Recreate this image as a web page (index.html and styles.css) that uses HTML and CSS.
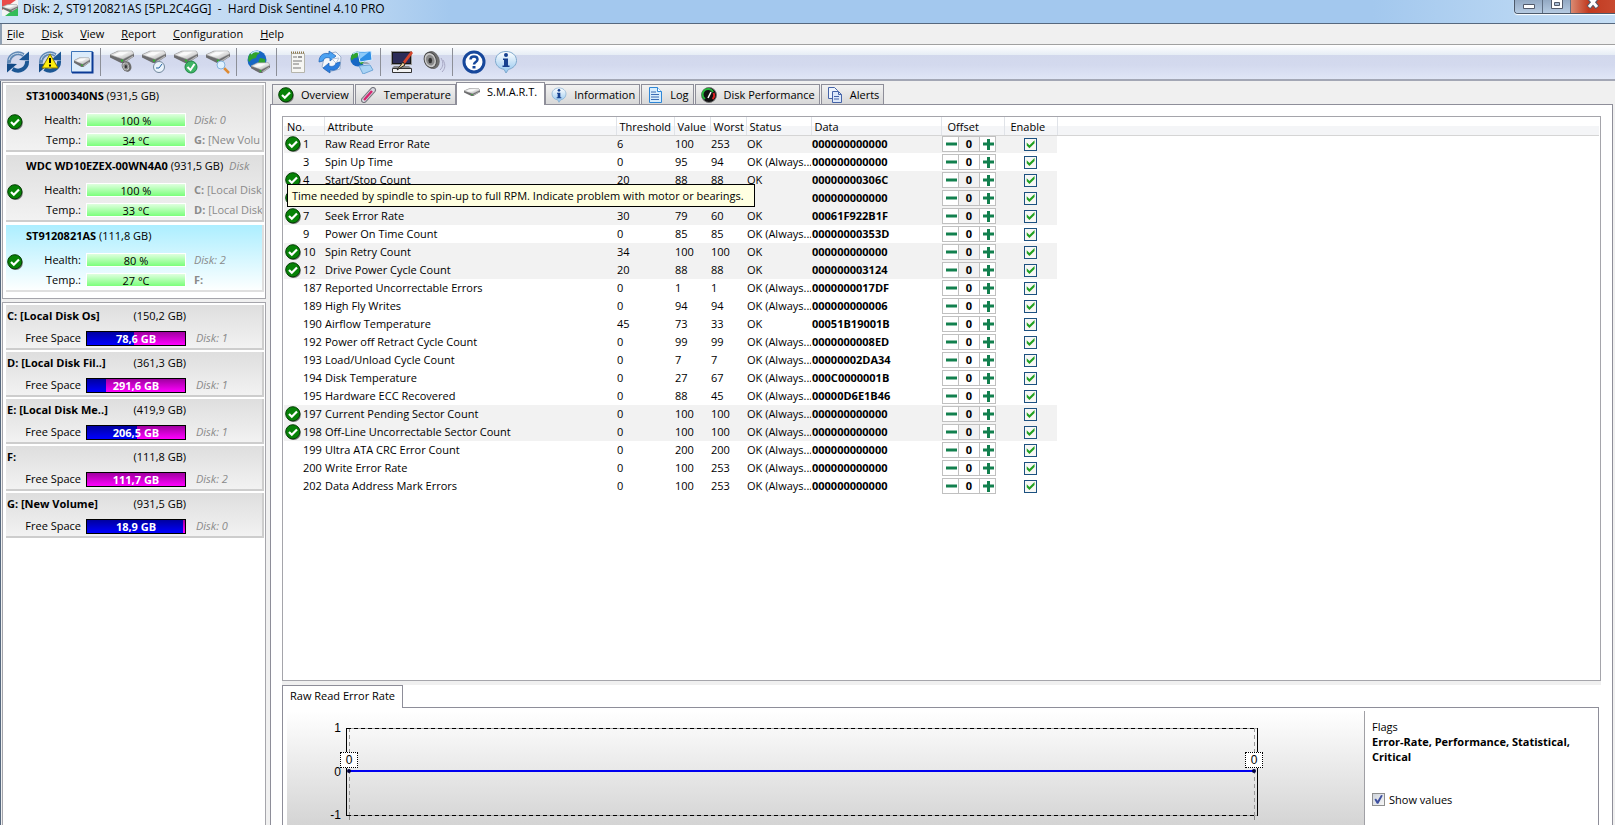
FILE: index.html
```html
<!DOCTYPE html>
<html lang="en">
<head>
	<meta charset="utf-8">
	<title>Hard Disk Sentinel 4.10 PRO</title>
	<link rel="stylesheet" href="styles.css">
	<script src="script.js" defer></script>
</head>

<body>

	<svg class="defs" aria-hidden="true">
		<linearGradient id="gInfo" x1="0" y1="0" x2="0" y2="1">
			<stop offset="0" stop-color="#ffffff"/><stop offset="1" stop-color="#8fc4ee"/>
		</linearGradient>
		<linearGradient id="gDrive" x1="0" y1="0" x2="1" y2="1">
			<stop offset="0" stop-color="#bdbdbd"/><stop offset=".4" stop-color="#f4f4f4"/><stop offset="1" stop-color="#a8a8a8"/>
		</linearGradient>
		<symbol id="ok" viewBox="0 0 16 16">
			<circle cx="8.6" cy="8.8" r="7.2" fill="#777"/>
			<circle cx="7.8" cy="7.8" r="7.1" fill="#078207" stroke="#033c03"/>
			<path d="M4 8l2.8 2.8L12 5.4" fill="none" stroke="#fff" stroke-width="2.2"/>
		</symbol>
		<symbol id="refresh" viewBox="0 0 24 24">
			<path d="M3 13C2.500 6 10 0.500 17.500 5" fill="none" stroke="#5f88b5" stroke-width="4"/>
			<path d="M13 10l10 .5V1.500z" fill="#1c5794"/>
			<path d="M21 11c.5 7-7 12.500-14.500 8" fill="none" stroke="#1c5794" stroke-width="4"/>
			<path d="M11 14L1 13.500v9z" fill="#124a86"/>
			<path d="M3 10C4 4.500 11 1.500 17 4.500" fill="none" stroke="#c7daea" stroke-width="1"/>
		</symbol>
		<symbol id="drive" viewBox="0 0 24 14" preserveAspectRatio="none">
			<path d="M0 5L8 1l14 0 2 3v3l-10 7h-3L0 8z" fill="#6c6c6e"/>
			<path d="M0 5L8 1h14l2 3-11 6z" fill="url(#gDrive)" stroke="#9c9c9c" stroke-width=".5"/>
			<path d="M4 5l6-3 8 .5-6 3.500z" fill="#fafafa"/>
			<path d="M14 12l9-6v1.500l-8 5.500z" fill="#b5b5b5"/>
			<circle cx="12" cy="11.500" r="1.200" fill="#2fb62f"/>
		</symbol>
		<symbol id="info" viewBox="0 0 24 24">
			<path d="M12 1.500c6 0 10.500 3.800 10.500 9 0 4.500-3.500 8-8 8.800L12 23l-2-3.700c-5-.6-8.500-4.300-8.500-8.800 0-5.200 4.500-9 10.500-9z" fill="url(#gInfo)" stroke="#7fa9cd"/>
			<circle cx="12" cy="5" r="2" fill="#16408f"/>
			<path d="M9 8.500h5v7h1.500v1.500H8.500v-1.500H10V10H9z" fill="#16408f"/>
		</symbol>
		<symbol id="speaker" viewBox="0 0 24 24">
			<ellipse cx="11" cy="11" rx="8" ry="10" transform="rotate(-20 11 11)" fill="#6e6e6e"/>
			<ellipse cx="9" cy="11" rx="6.500" ry="8.500" transform="rotate(-20 9 11)" fill="#c9c9c9" stroke="#444"/>
			<ellipse cx="9" cy="11" rx="4.500" ry="6" transform="rotate(-20 9 11)" fill="#8a8a8a"/>
			<ellipse cx="9" cy="11.500" rx="2" ry="3" fill="#333"/>
		</symbol>
		<symbol id="globe" viewBox="0 0 20 20">
			<circle cx="10" cy="10" r="9.500" fill="#1767c4"/>
			<path d="M5 2c4-2 7-1 8 1l-3 2-1 3-4 1-3 3C0 8 2 4 5 2zM13 8l5 1c1 4-1 7-4 8l-3-4z" fill="#2ea32e"/>
			<path d="M4 4c2-3 6-3 8-2" fill="none" stroke="#bfe0ff" stroke-width="1.500"/>
		</symbol>
		<symbol id="monitor" viewBox="0 0 16 14">
			<path d="M1 1l13-1 1 9-12 2z" fill="#2d8fe6" stroke="#dceefc"/>
			<path d="M2 2l10-1-9 7z" fill="#8ccaf9"/>
			<path d="M7 11h3l3 2H5z" fill="#9aa7b5"/>
		</symbol>
	</svg>

	<div class="window">

		<header class="titlebar">
			<svg class="app-icon" viewBox="0 0 16 16">
				<path d="M0 0h16v16H0z" fill="#f4f4f4"/>
				<path d="M0 0h14L0 10z" fill="#ea4a4a"/>
				<path d="M16 16V6L3 16z" fill="#35bd58"/>
				<use href="#drive" x="0" y="4" width="16" height="8"/>
			</svg>
			<h1>Disk: 2, ST9120821AS [5PL2C4GG] &nbsp;- &nbsp;Hard Disk Sentinel 4.10 PRO</h1>
			<div class="win-buttons">
				<button aria-label="Minimize"><svg viewBox="0 0 14 9"><path d="M1.500 4.500h11v4h-11z" fill="#fff" stroke="#525a6b"/></svg></button>
				<button aria-label="Restore"><svg viewBox="0 0 14 9"><path d="M1.500-3h11V8.500h-11z" fill="#fff" stroke="#525a6b"/><path d="M4.500 2.500h5v3h-5z" fill="#a9bdd4" stroke="#525a6b"/></svg></button>
				<button class="close" aria-label="Close"><svg viewBox="0 0 14 9"><path d="M2.500-3l9 10.500M11.500-3l-9 10.500" stroke="#525a6b" stroke-width="5"/><path d="M3-2.500l8 9.500M11-2.500L3 7" stroke="#fff" stroke-width="3"/></svg></button>
			</div>
		</header>

		<nav class="menubar">
			<button><u>F</u>ile</button>
			<button><u>D</u>isk</button>
			<button><u>V</u>iew</button>
			<button><u>R</u>eport</button>
			<button><u>C</u>onfiguration</button>
			<button><u>H</u>elp</button>
		</nav>

		<div class="toolbar">
			<button aria-label="Refresh"><svg viewBox="0 0 24 24"><use href="#refresh"/></svg></button>
			<button aria-label="Force refresh"><svg viewBox="0 0 24 24"><use href="#refresh"/><path d="M12 4l8 14H4z" fill="#ffee10" stroke="#8a7a00"/><path d="M12 8v5M12 14.500v2" stroke="#000" stroke-width="2"/></svg></button>
			<button aria-label="Disk panel"><svg viewBox="0 0 24 24"><path d="M1.500 1.500h21v21h-21z" fill="#dcecfb" stroke="#3d74b8"/><path d="M22.500 2v20.500H2" fill="none" stroke="#0a3a96" stroke-width="2"/><use href="#drive" x="4" y="7" width="16" height="10"/></svg></button>
			<span class="sep"></span>
			<button aria-label="Acoustic settings"><svg viewBox="0 0 24 24"><use href="#drive" width="24" height="13"/><use href="#speaker" x="11" y="10" width="13" height="14"/></svg></button>
			<button aria-label="Short test"><svg viewBox="0 0 24 24"><use href="#drive" width="24" height="13"/><circle cx="17" cy="17" r="5.500" fill="#eaf3fb" stroke="#71879c"/><path d="M17 18l3-4M17 18h-3" stroke="#1f5f9f"/></svg></button>
			<button aria-label="Extended test"><svg viewBox="0 0 24 24"><use href="#drive" width="24" height="13"/><circle cx="17" cy="17" r="6" fill="#3fb565" stroke="#1d8743"/><path d="M13.500 17l3 3 4-6" fill="none" stroke="#fff" stroke-width="2"/></svg></button>
			<button aria-label="Surface test"><svg viewBox="0 0 24 24"><use href="#drive" width="24" height="13"/><path d="M18 18l5 5" stroke="#dd8a33" stroke-width="2.500"/><circle cx="15" cy="15" r="4" fill="#dff1ff" stroke="#86b3dc"/></svg></button>
			<span class="sep"></span>
			<button aria-label="Online"><svg viewBox="0 0 24 24"><use href="#globe" x="1" y="0" width="20" height="20"/><use href="#drive" x="5" y="12" width="19" height="11"/></svg></button>
			<span class="sep"></span>
			<button aria-label="Report"><svg viewBox="0 0 24 24"><path d="M5.500 3.500h13v19h-13z" fill="#f6f6f3" stroke="#b5b5ac"/><path d="M5 2.500h14" stroke="#8d7747" stroke-width="2" stroke-dasharray="1 1"/><path d="M7 7h4M7 11h9M7 14h6M7 18h8" stroke="#777"/><path d="M12 6h4v2h-4z" fill="#999"/></svg></button>
			<button aria-label="Send report"><svg viewBox="0 0 24 24"><path d="M7 4l11-2 5 5-1 12-12 3-6-5z" fill="#f4f6fa" stroke="#9fb2cd"/><path d="M1 12C1 5 6 2 11 4V1l7 5-6 5V8C8 7 6 8 5 11z" fill="#4ba2f2" stroke="#1b5fb3" stroke-width=".7"/><path d="M22 12c0 7-5 9-10 8v3l-7-5 6-5v3c4 1 6 0 7-3z" fill="#2b7ee0" stroke="#1b5fb3" stroke-width=".7"/><path d="M14 9l7-1-3 5z" fill="#fff" stroke="#b7c6dd"/></svg></button>
			<button aria-label="Network"><svg viewBox="0 0 24 24"><use href="#globe" x="0" y="1" width="16" height="16"/><use href="#monitor" x="7" y="1" width="16" height="14"/><path d="M9 16l11-1 3 5-10 4z" fill="#a9d3f5" stroke="#6fa6d6"/></svg></button>
			<span class="sep"></span>
			<button aria-label="Appearance"><svg viewBox="0 0 24 24"><path d="M1 1h21v14H1z" fill="#9a9a9a"/><path d="M2 2h19v12H2z" fill="#161616"/><path d="M3 3h17v10H3z" fill="#2c2c58"/><path d="M4 16h15l2 2H2z" fill="#888"/><path d="M2.500 18.500h19v4h-19z" fill="#f2f2f2" stroke="#333"/><path d="M21 1l2 2-9 12-2-2z" fill="#d6452b"/><path d="M13 12l2 3-8 5z" fill="#f2d6a0" stroke="#222"/></svg></button>
			<button aria-label="Sound"><svg viewBox="0 0 24 24"><use href="#speaker" width="22" height="22"/><path d="M19 8c3 5 2 9-1 12M21 10c3 5 2 9-1 12" fill="none" stroke="#a8a8c4"/></svg></button>
			<span class="sep"></span>
			<button aria-label="Help"><svg viewBox="0 0 24 24"><circle cx="12" cy="12" r="10" fill="#fff" stroke="#16479b" stroke-width="3"/><path d="M8.500 9.500c0-4 7-4 7 0 0 2.500-3.500 2.500-3.500 5" fill="none" stroke="#16479b" stroke-width="2.500"/><path d="M10.500 16h3v2.500h-3z" fill="#16479b"/></svg></button>
			<button aria-label="About"><svg viewBox="0 0 24 24"><use href="#info"/></svg></button>
		</div>

		<div class="body">

			<aside class="sidebar">
				<div class="box disks" id="disks"></div>
				<div class="box volumes" id="volumes"></div>
			</aside>

			<main class="main">
				<div class="tabs" role="tablist">
					<button role="tab"><svg viewBox="0 0 16 16"><use href="#ok"/></svg>Overview</button>
					<button role="tab"><svg viewBox="0 0 16 16"><path d="M3 13L12 3" stroke="#77777f" stroke-width="6" stroke-linecap="round"/><path d="M3 13L12 3" stroke="#d8d8e0" stroke-width="4" stroke-linecap="round"/><path d="M3 13l8-9" stroke="#d3266f" stroke-width="2.500"/></svg>Temperature</button>
					<button role="tab" class="active" aria-selected="true"><svg viewBox="0 0 16 16"><use href="#drive" y="4" width="16" height="8"/></svg>S.M.A.R.T.</button>
					<button role="tab"><svg viewBox="0 0 24 24"><use href="#info"/></svg>Information</button>
					<button role="tab"><svg viewBox="0 0 16 16"><path d="M2.500.5h8l4 4v11h-12z" fill="#d8edfd" stroke="#2f86d6"/><path d="M10.500.5v4h4" fill="#fff" stroke="#2f86d6"/><path d="M4 5h5M4 7.500h8M4 10h8M4 12.500h8" stroke="#3c6db4"/></svg>Log</button>
					<button role="tab"><svg viewBox="0 0 16 16"><circle cx="8" cy="8" r="7.500" fill="#111" stroke="#777"/><path d="M4 12a5.500 5.500 0 1 1 8-7" fill="none" stroke="#25b43a" stroke-width="2"/><path d="M12.500 6a5 5 0 0 1-1 6" fill="none" stroke="#d22" stroke-width="2"/><path d="M7 11l3-6" stroke="#fff" stroke-width="1.500"/></svg>Disk Performance</button>
					<button role="tab"><svg viewBox="0 0 16 16"><path d="M1.500.5h6l3 3v8h-9z" fill="#eef4fd" stroke="#4664a8"/><path d="M5.500 4.500h6l3 3v8h-9z" fill="#dce8fa" stroke="#4664a8"/><path d="M11.500 4.500v3h3M7 9.500h5M7 12h5" fill="none" stroke="#4664a8"/></svg>Alerts</button>
				</div>

				<div class="page">
					<div class="list">
						<table class="smart">
							<thead>
								<tr>
									<th class="c-no">No.</th>
									<th class="c-attr">Attribute</th>
									<th class="c-thr">Threshold</th>
									<th class="c-val">Value</th>
									<th class="c-val">Worst</th>
									<th class="c-stat">Status</th>
									<th class="c-data">Data</th>
									<th class="c-off">Offset</th>
									<th class="c-en">Enable</th>
									<th></th>
								</tr>
							</thead>
							<tbody id="attributes"></tbody>
						</table>
						<div class="tooltip" role="tooltip">Time needed by spindle to spin-up to full RPM. Indicate problem with motor or bearings.</div>
					</div>

					<div class="splitter"></div>

					<section class="detail">
						<div class="subtabs"><button>Raw Read Error Rate</button></div>
						<div class="detail-page">
							<div class="chart">
								<div class="y-axis"><span>1</span><span>0</span><span>-1</span></div>
								<div class="plot">
									<div class="line"></div>
									<span class="point left">0</span>
									<span class="point right">0</span>
								</div>
							</div>
							<div class="flags">
								<p>Flags</p>
								<p class="flag-list">Error-Rate, Performance, Statistical, Critical</p>
								<label><input type="checkbox" class="win-check" checked>Show values</label>
							</div>
						</div>
					</section>
				</div>
			</main>

		</div>
	</div>

</body>
</html>
```
FILE: styles.css
```css
* {
	box-sizing: border-box;
}

body {
	margin: 0;
	font: 11px/16px "Open Sans", "Noto Sans", sans-serif;
	color: #000;
}

button {
	font: inherit;
	color: inherit;
	background: none;
	border: 0;
	padding: 0;
}

p, h1 {
	margin: 0;
}

svg {
	display: block;
}

.defs {
	position: absolute;
	width: 0;
	height: 0;
}

.window {
	display: flex;
	flex-direction: column;
	height: 100vh;
	overflow: hidden;
	background: #f0f0f0;
}

/* title bar */
.titlebar {
	display: flex;
	align-items: flex-start;
	height: 24px;
	padding-left: 2px;
	border-bottom: 1px solid #56687e;
	background: linear-gradient(90deg, #cfe3f6 0, #bcd7f2 350px, #a3c8ee 450px, #a3c8ee 85%, #c5def5 100%);
}

.app-icon {
	width: 16px;
	height: 16px;
	margin-right: 5px;
}

.titlebar h1 {
	flex: 1;
	font-size: 12px;
	font-weight: normal;
	line-height: 17px;
}

.win-buttons {
	display: flex;
	height: 14px;
	border: 1px solid #4d5a6b;
	border-top: 0;
	border-right: 0;
	border-radius: 0 0 0 4px;
	overflow: hidden;
	box-shadow: 0 1px 1px #fff;
}

.win-buttons button {
	width: 28px;
	border-right: 1px solid #5f6f84;
	background: linear-gradient(#93a9c3, #b6cbe2);
}

.win-buttons svg {
	width: 14px;
	height: 9px;
	margin: 0 auto 4px;
}

.win-buttons .close {
	width: 44px;
	border-right: 0;
	background: linear-gradient(90deg, #d98a72, #c23a20 40%, #c8492f);
}

/* menu and toolbar */
.menubar {
	display: flex;
	gap: 17px;
	height: 21px;
	padding-left: 5px;
	border-left: 2px solid #8fa0b3;
	border-bottom: 1px solid #a0a0a0;
}

.toolbar {
	display: flex;
	align-items: center;
	height: 36px;
	padding-left: 2px;
	border-bottom: 2px solid #a3a7b5;
	background: linear-gradient(#fff, #e6edf5 10px, #d2d8ec 10px, #d3d9ee 20px, #e0e6f6);
}

.toolbar button {
	width: 32px;
	padding: 0 4px;
}

.toolbar svg {
	width: 24px;
	height: 24px;
}

.sep {
	width: 1px;
	height: 28px;
	margin: 0 5px 0 2px;
	background: #8c8f98;
}

.body {
	flex: 1;
	display: flex;
	min-height: 0;
	padding: 1px 2px 0 2px;
	border-left: 1px solid #56687e;
}

/* sidebar */
.sidebar {
	display: flex;
	flex-direction: column;
	gap: 3px;
	width: 264px;
	margin-left: -1px;
}

.box {
	padding: 2px 1px 2px 3px;
	background: #fff;
	border: 1px solid #a5a5ab;
}

.disks {
	height: 217px;
}

.volumes {
	flex: 1;
	border-bottom: 0;
}

.disk, .volume {
	display: grid;
	grid-template-columns: 75px 100px 1fr;
	column-gap: 5px;
	align-content: start;
	align-items: center;
	border: solid #cdcdcd;
	border-width: 0 2px 2px 0;
	background: linear-gradient(#dedede, #f2f2f2);
	overflow: hidden;
	white-space: nowrap;
}

.disk {
	position: relative;
	height: 67px;
	margin-bottom: 3px;
	grid-template-rows: 25px 20px 20px;
}

.disk.selected {
	background: linear-gradient(#aceeff, #fdffff);
	border-color: #dfdfdf;
}

.disk .name {
	grid-column: 1 / -1;
	align-self: start;
	padding-left: 20px;
	line-height: 22px;
}

.disk .note, .volume .note {
	color: #8a8a8a;
	padding-left: 3px;
}

.disk .label, .volume .label {
	text-align: right;
}

.disk svg {
	position: absolute;
	left: 1px;
	top: 29px;
	width: 16px;
	height: 16px;
}

.meter {
	height: 14px;
	border: 1px solid #fff;
	background: linear-gradient(#dfffdf, #7bff7b);
	line-height: 14px;
	text-align: center;
}

.volume {
	height: 45px;
	margin-bottom: 2px;
	grid-template-rows: 22px 22px;
}

.volume .title {
	grid-column: 1 / 3;
	display: flex;
	justify-content: space-between;
	padding-left: 1px;
}

.volume .label {
	grid-column: 1;
}

.volume .note {
	padding-left: 5px;
}

.space {
	position: relative;
	height: 15px;
	border: 1px solid #000;
	background: linear-gradient(#a000a0, #ff00ff);
	color: #fff;
	font-weight: bold;
	line-height: 14px;
	text-align: center;
}

.space .used {
	position: absolute;
	left: 0;
	top: 0;
	height: 100%;
	background: linear-gradient(#0000a0, #0000ff);
}

.space .free {
	position: relative;
}

/* main tabs */
.main {
	flex: 1;
	display: flex;
	flex-direction: column;
	min-width: 0;
	margin-left: 4px;
}

.tabs {
	display: flex;
	align-items: flex-end;
	gap: 1px;
	height: 22px;
	padding-left: 2px;
}

.tabs button {
	display: flex;
	align-items: center;
	gap: 7px;
	height: 20px;
	padding: 0 4px 0 5px;
	border: 1px solid #8e8e99;
	border-bottom: 0;
	background: linear-gradient(#f2f2f2, #d8d8d8);
	white-space: nowrap;
}

.tabs svg {
	width: 16px;
	height: 16px;
}

.tabs .active {
	height: 23px;
	margin: 0 -1px;
	padding: 0 7px 4px;
	margin-bottom: -1px;
	background: #fff;
	z-index: 1;
}

.page {
	flex: 1;
	display: flex;
	flex-direction: column;
	min-height: 0;
	padding: 11px 11px 0;
	border: 1px solid #8e8e99;
	border-bottom: 0;
	background: #fff;
}

.list {
	flex: 1;
	position: relative;
	min-height: 0;
	padding: 0 1px;
	border: 1px solid #a5a5ab;
}

/* attribute table */
.smart {
	width: 100%;
	table-layout: fixed;
	border-collapse: collapse;
	white-space: nowrap;
}

.smart th {
	height: 18px;
	padding: 2px 0 0 3px;
	border-right: 1px solid #e0e3e8;
	border-bottom: 1px solid #d5d5d5;
	background: linear-gradient(#fff 50%, #f4f5f7 50%);
	font-weight: normal;
	line-height: 14px;
	text-align: left;
}

.smart th:last-child {
	border-right: 0;
}

.smart td {
	height: 18px;
	padding: 0 0 0 1px;
	line-height: 16px;
	overflow: hidden;
}

.smart .critical td {
	background: #f2f2f2;
}

.smart .critical td:last-child {
	background: none;
}

.c-no { width: 40px; }
.c-attr { width: 292px; }
.c-thr { width: 58px; }
.c-val { width: 36px; }
.c-stat { width: 65px; }
.c-data { width: 130px; }
.c-off { width: 63px; }
.c-en { width: 53px; }

.smart .c-off, .smart .c-en {
	padding-left: 6px;
}

.smart .num {
	display: flex;
	gap: 1px;
}

.num i {
	width: 17px;
	height: 16px;
}

.num svg {
	width: 16px;
	height: 16px;
}

.smart .data {
	font-weight: bold;
}

.stepper {
	display: flex;
	width: 54px;
	height: 16px;
	border: 1px solid #c0c0c0;
}

.stepper button {
	display: grid;
	place-items: center;
	width: 15px;
	background: #fff;
}

.stepper svg {
	width: 12px;
	height: 12px;
}

.stepper input {
	width: 22px;
	padding: 0;
	border: solid #c0c0c0;
	border-width: 0 1px;
	background: transparent;
	font: bold 11px/14px "Open Sans", sans-serif;
	text-align: center;
}

.tick, .win-check {
	appearance: none;
	display: block;
	width: 13px;
	height: 13px;
	margin: 0;
	border: 1px solid #1c5180;
	background: #f7f7f5;
}

.tick {
	margin-left: 19px;
}

.tick:checked::after, .win-check:checked::after {
	content: "";
	display: block;
	width: 9px;
	height: 9px;
	margin: 1px;
	background: #21a121;
	clip-path: polygon(8% 30%, 8% 65%, 38% 95%, 95% 40%, 95% 5%, 38% 60%);
}

.win-check {
	border-color: #8e8f8f;
	background: linear-gradient(135deg, #cfd4dc, #f6f6f6);
}

.win-check:checked::after {
	background: #3d50a0;
	clip-path: polygon(5% 50%, 22% 40%, 40% 65%, 78% 0, 98% 5%, 48% 98%, 32% 98%);
}

.tooltip {
	position: absolute;
	left: 4px;
	top: 67px;
	height: 23px;
	padding: 0 10px 0 4px;
	border: 1px solid #000;
	background: #ffffe1;
	line-height: 21px;
	white-space: nowrap;
}

/* lower pane */
.splitter {
	height: 4px;
	background: #f0f0f0;
}

.detail {
	height: 140px;
	padding-right: 2px;
}

.subtabs button {
	position: relative;
	display: block;
	height: 23px;
	margin-bottom: -1px;
	padding: 0 7px 2px;
	border: 1px solid #8e8e99;
	border-bottom: 0;
	background: #fff;
}

.detail-page {
	display: flex;
	height: 118px;
	padding: 3px 0 0 4px;
	border: 1px solid #8e8e99;
	border-bottom: 0;
}

.chart {
	flex: 1;
	display: flex;
	padding: 17px 106px 0 0;
	background: linear-gradient(#fff, #d4d4d4);
	font: 12px/14px "Liberation Sans", sans-serif;
}

.y-axis {
	display: flex;
	flex-direction: column;
	justify-content: space-between;
	width: 54px;
	height: 101px;
	margin-top: -7px;
	text-align: right;
}

.plot {
	flex: 1;
	position: relative;
	height: 88px;
	margin-left: 5px;
	border: solid #000;
	border-width: 0 1px;
	background:
		repeating-linear-gradient(90deg, #000 0 4px, #aaa 4px 7px) 0 0 / 100% 1px no-repeat,
		repeating-linear-gradient(90deg, #000 0 4px, #aaa 4px 7px) 0 100% / 100% 1px no-repeat,
		repeating-linear-gradient(#999 0 4px, transparent 4px 7px) 2px 0 / 1px 100% no-repeat,
		repeating-linear-gradient(#999 0 4px, transparent 4px 7px) calc(100% - 2px) 0 / 1px 100% no-repeat;
}

/* tick marks under the first and the last value */
.plot::after {
	content: "";
	position: absolute;
	left: 2px;
	right: 2px;
	top: 100%;
	height: 4px;
	border: solid #888;
	border-width: 0 1px;
}

.plot .line {
	position: absolute;
	left: 2px;
	right: 2px;
	top: 42px;
	height: 2px;
	background: #0000f0;
}

.point {
	position: absolute;
	top: 24px;
	width: 18px;
	height: 16px;
	border: 1px dotted #000;
	background: #fff;
	text-align: center;
}

.point::after {
	content: "";
	position: absolute;
	left: 6px;
	top: 16px;
	width: 4px;
	height: 4px;
	border-radius: 2px;
	background: #000040;
}

.point.left {
	left: -7px;
}

.point.right {
	right: -6px;
}

.flags {
	width: 234px;
	padding: 8px 8px 0 7px;
	border-left: 1px solid #a0a0a5;
	line-height: 15px;
}

.flag-list {
	font-weight: bold;
}

.flags label {
	display: flex;
	align-items: center;
	gap: 4px;
	margin-top: 28px;
}
```
FILE: script.js
```js
var okIcon = '<svg viewBox="0 0 16 16"><use href="#ok"/></svg>';

var disks = [
	{ name: "ST31000340NS", size: "931,5 GB", health: "100 %", temp: "34 °C", extra: "", n1: "<em>Disk: 0</em>", n2: "<b>G:</b> [New Volu" },
	{ name: "WDC WD10EZEX-00WN4A0", size: "931,5 GB", health: "100 %", temp: "33 °C", extra: "Disk", n1: "<b>C:</b> [Local Disk", n2: "<b>D:</b> [Local Disk" },
	{ name: "ST9120821AS", size: "111,8 GB", health: "80 %", temp: "27 °C", extra: "", n1: "<em>Disk: 2</em>", n2: "<b>F:</b>", selected: true }
];

// used is the filled share of the bar, in percent
var volumes = [
	{ name: "C: [Local Disk Os]", size: "150,2 GB", free: "78,6 GB", used: 48, disk: 1 },
	{ name: "D: [Local Disk Fil..]", size: "361,3 GB", free: "291,6 GB", used: 19, disk: 1 },
	{ name: "E: [Local Disk Me..]", size: "419,9 GB", free: "206,5 GB", used: 51, disk: 1 },
	{ name: "F:", size: "111,8 GB", free: "111,7 GB", used: 0, disk: 2 },
	{ name: "G: [New Volume]", size: "931,5 GB", free: "18,9 GB", used: 98, disk: 0 }
];

// no, attribute, threshold, value, worst, status, data, critical
var always = "OK (Always...";
var attributes = [
	[1, "Raw Read Error Rate", 6, 100, 253, "OK", "000000000000", 1],
	[3, "Spin Up Time", 0, 95, 94, always, "000000000000", 0],
	[4, "Start/Stop Count", 20, 88, 88, "OK", "00000000306C", 1],
	["", "", "", "", "", "", "000000000000", 1],
	[7, "Seek Error Rate", 30, 79, 60, "OK", "00061F922B1F", 1],
	[9, "Power On Time Count", 0, 85, 85, always, "00000000353D", 0],
	[10, "Spin Retry Count", 34, 100, 100, "OK", "000000000000", 1],
	[12, "Drive Power Cycle Count", 20, 88, 88, "OK", "000000003124", 1],
	[187, "Reported Uncorrectable Errors", 0, 1, 1, always, "0000000017DF", 0],
	[189, "High Fly Writes", 0, 94, 94, always, "000000000006", 0],
	[190, "Airflow Temperature", 45, 73, 33, "OK", "00051B19001B", 0],
	[192, "Power off Retract Cycle Count", 0, 99, 99, always, "0000000008ED", 0],
	[193, "Load/Unload Cycle Count", 0, 7, 7, always, "00000002DA34", 0],
	[194, "Disk Temperature", 0, 27, 67, always, "000C0000001B", 0],
	[195, "Hardware ECC Recovered", 0, 88, 45, always, "00000D6E1B46", 0],
	[197, "Current Pending Sector Count", 0, 100, 100, always, "000000000000", 1],
	[198, "Off-Line Uncorrectable Sector Count", 0, 100, 100, always, "000000000000", 1],
	[199, "Ultra ATA CRC Error Count", 0, 200, 200, always, "000000000000", 0],
	[200, "Write Error Rate", 0, 100, 253, always, "000000000000", 0],
	[202, "Data Address Mark Errors", 0, 100, 253, always, "000000000000", 0]
];

document.getElementById("disks").innerHTML = disks.map(function(d) {
	return '<div class="disk' + (d.selected ? ' selected' : '') + '">' + okIcon +
		'<div class="name"><b>' + d.name + '</b> (' + d.size + ') <em class="note">' + d.extra + '</em></div>' +
		'<span class="label">Health:</span><div class="meter">' + d.health + '</div><span class="note">' + d.n1 + '</span>' +
		'<span class="label">Temp.:</span><div class="meter">' + d.temp + '</div><span class="note">' + d.n2 + '</span>' +
		'</div>';
}).join("");

document.getElementById("volumes").innerHTML = volumes.map(function(v) {
	return '<div class="volume">' +
		'<div class="title"><b>' + v.name + '</b><span>(' + v.size + ')</span></div>' +
		'<span class="label">Free Space</span>' +
		'<div class="space"><div class="used" style="width:' + v.used + '%"></div><span class="free">' + v.free + '</span></div>' +
		'<em class="note">Disk: ' + v.disk + '</em>' +
		'</div>';
}).join("");

document.getElementById("attributes").innerHTML = attributes.map(function(a) {
	return '<tr class="' + (a[7] ? 'critical' : '') + '">' +
		'<td><div class="num"><i>' + (a[7] ? okIcon : '') + '</i>' + a[0] + '</div></td>' +
		'<td>' + a[1] + '</td><td>' + a[2] + '</td><td>' + a[3] + '</td><td>' + a[4] + '</td>' +
		'<td>' + a[5] + '</td>' +
		'<td class="data">' + a[6] + '</td>' +
		'<td><div class="stepper">' +
			'<button aria-label="Decrease"><svg viewBox="0 0 12 12"><path d="M1 6h11" stroke="#12804e" stroke-width="3"/></svg></button>' +
			'<input type="text" value="0" aria-label="Offset ' + a[0] + '">' +
			'<button aria-label="Increase"><svg viewBox="0 0 12 12"><path d="M1 6h11M6.500 1v11" stroke="#12804e" stroke-width="3"/></svg></button>' +
		'</div></td>' +
		'<td><input type="checkbox" class="tick" checked aria-label="Enable ' + a[0] + '"></td><td></td></tr>';
}).join("");
```
